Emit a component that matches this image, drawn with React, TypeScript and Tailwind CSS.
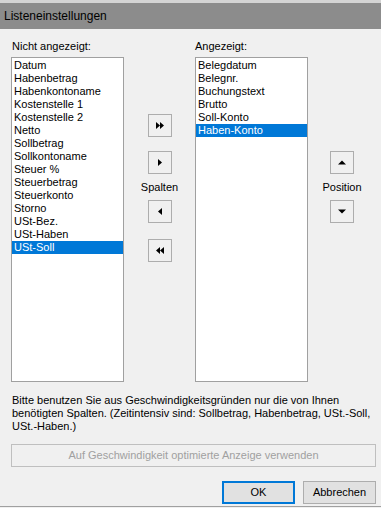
import React from "react";

const left = [
  "Datum",
  "Habenbetrag",
  "Habenkontoname",
  "Kostenstelle 1",
  "Kostenstelle 2",
  "Netto",
  "Sollbetrag",
  "Sollkontoname",
  "Steuer %",
  "Steuerbetrag",
  "Steuerkonto",
  "Storno",
  "USt-Bez.",
  "USt-Haben",
  "USt-Soll",
];
const right = ["Belegdatum", "Belegnr.", "Buchungstext", "Brutto", "Soll-Konto", "Haben-Konto"];

type Kind = "rr" | "r" | "l" | "ll" | "u" | "d";

function Glyph({ kind }: { kind: Kind }) {
  let d = "";
  if (kind === "rr") d = "M1 1 L5 4.5 L1 8 Z M5 1 L9 4.5 L5 8 Z";
  if (kind === "r") d = "M3 1 L7 4.5 L3 8 Z";
  if (kind === "l") d = "M7 1 L3 4.5 L7 8 Z";
  if (kind === "ll") d = "M9 1 L5 4.5 L9 8 Z M5 1 L1 4.5 L5 8 Z";
  if (kind === "u") d = "M1 6.5 L5 2.5 L9 6.5 Z";
  if (kind === "d") d = "M1 2.5 L5 6.5 L9 2.5 Z";
  return (
    <svg width="10" height="9" viewBox="0 0 10 9">
      <path d={d} fill="#000" />
    </svg>
  );
}

function SmallBtn({ kind }: { kind: Kind }) {
  return (
    <div className="w-[24px] h-[23px] border border-[#adadad] bg-[#f0f0f0] flex items-center justify-center">
      <Glyph kind={kind} />
    </div>
  );
}

function ListBox({ items, sel }: { items: string[]; sel: number }) {
  return (
    <div className="w-[113px] h-[325px] border border-[#a0a0a0] bg-white pt-[1px]">
      {items.map((t, i) => (
        <div
          key={t}
          className={
            "h-[13px] leading-[13px] pl-[2px] whitespace-nowrap " +
            (i === sel ? "bg-[#0078d7] text-white" : "text-black")
          }
        >
          {t}
        </div>
      ))}
    </div>
  );
}

export default function App() {
  return (
    <div
      className="w-[381px] h-[508px] bg-[#f0f0f0] flex flex-col text-[11px] text-black overflow-hidden"
      style={{ fontFamily: '"Liberation Sans", Arial, sans-serif' }}
    >
      <div className="h-[3px] bg-[#d4d4d4]" />
      <div className="h-[26px] bg-[#8c8c8c] flex items-center px-[4px] text-[12px]">Listeneinstellungen</div>
      <div className="flex flex-col pl-[11px] pt-[9px] flex-1">
        <div className="flex">
          <div className="flex flex-col">
            <div className="h-[19px] leading-[16px] pl-[1px]">Nicht angezeigt:</div>
            <ListBox items={left} sel={14} />
          </div>
          <div className="w-[71px] flex flex-col items-center pt-[76px]">
            <SmallBtn kind="rr" />
            <div className="h-[14px]" />
            <SmallBtn kind="r" />
            <div className="h-[26px] flex items-center">Spalten</div>
            <SmallBtn kind="l" />
            <div className="h-[16px]" />
            <SmallBtn kind="ll" />
          </div>
          <div className="flex flex-col">
            <div className="h-[19px] leading-[16px]">Angezeigt:</div>
            <ListBox items={right} sel={5} />
          </div>
          <div className="w-[68px] flex flex-col items-center pt-[113px]">
            <SmallBtn kind="u" />
            <div className="h-[26px] flex items-center">Position</div>
            <SmallBtn kind="d" />
          </div>
        </div>
        <div className="mt-[12px] leading-[13px] pl-[1px] whitespace-nowrap">
          Bitte benutzen Sie aus Geschwindigkeitsgründen nur die von Ihnen
          <br />
          benötigten Spalten. (Zeitintensiv sind: Sollbetrag, Habenbetrag, USt.-Soll,
          <br />
          USt.-Haben.)
        </div>
        <div className="mt-[11px] w-[365px] h-[23px] border border-[#bfbfbf] bg-[#f0f0f0] flex items-center justify-center text-[#a0a0a0]">
          Auf Geschwindigkeit optimierte Anzeige verwenden
        </div>
        <div className="mt-[14px] flex justify-end pr-[5px] gap-[8px]">
          <div className="w-[73px] h-[23px] border-2 border-[#0078d7] bg-[#e1e1e1] flex items-center justify-center">
            OK
          </div>
          <div className="w-[73px] h-[23px] border border-[#adadad] bg-[#e1e1e1] flex items-center justify-center">
            Abbrechen
          </div>
        </div>
      </div>
      <div className="h-[1px] bg-[#a0a0a0]" />
      <div className="h-[1px]" />
    </div>
  );
}
